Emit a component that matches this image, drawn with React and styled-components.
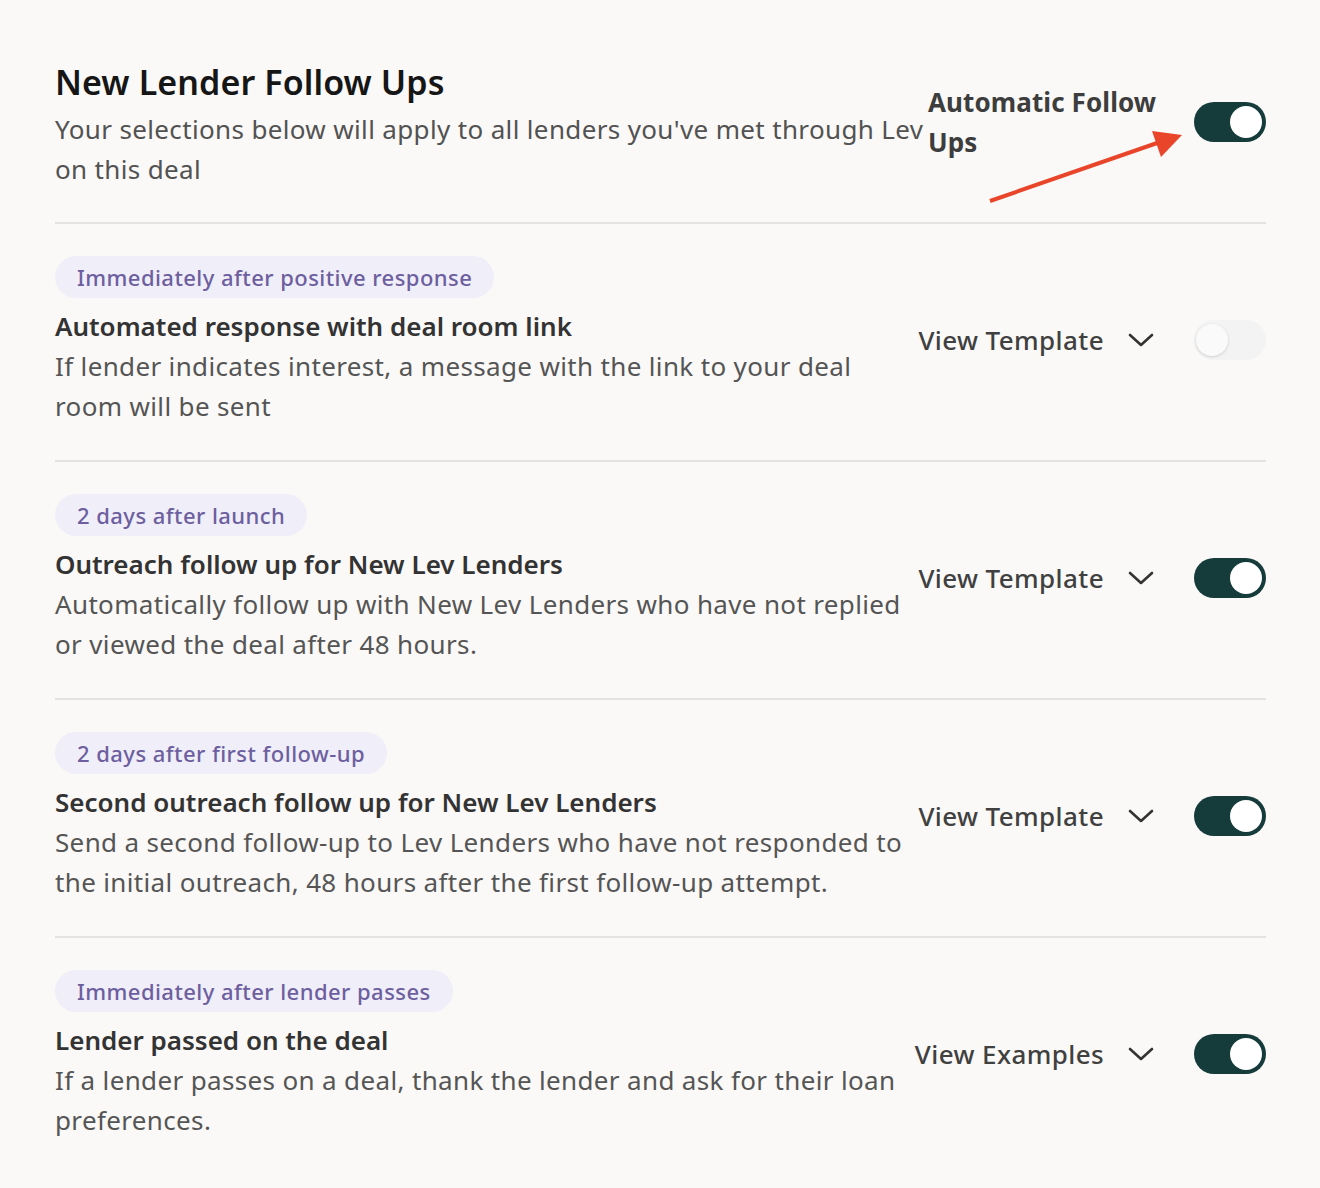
import React from 'react';
import styled, { createGlobalStyle } from 'styled-components';

const GlobalStyle = createGlobalStyle`
  html, body {
    margin: 0;
    padding: 0;
    background: #faf9f7;
  }
  body {
    font-family: 'Noto Sans', 'Open Sans', sans-serif;
    -webkit-font-smoothing: antialiased;
  }
`;

const Page = styled.div`
  position: relative;
  width: 1320px;
  min-height: 1188px;
  box-sizing: border-box;
  padding: 58px 54px 0 55px;
  background: #faf9f7;
`;

const Header = styled.div`
  display: flex;
  align-items: flex-start;
  justify-content: space-between;
  padding-bottom: 33px;
  border-bottom: 2px solid #e4e3e1;
`;

const HeaderText = styled.div`
  flex: 1;
  max-width: 872px;
`;

const Title = styled.h1`
  margin: 0 0 3px;
  font-size: 34px;
  font-weight: 600;
  line-height: 48px;
  color: #161616;
  letter-spacing: 0.1px;
`;

const Subtitle = styled.p`
  margin: 0;
  font-size: 26px;
  line-height: 40px;
  color: #525252;
  letter-spacing: 0.35px;
`;

const MasterControl = styled.div`
  display: flex;
  align-items: center;
  gap: 34px;
  margin-top: 24px;
`;

const MasterLabel = styled.div`
  width: 232px;
  font-size: 26px;
  font-weight: 700;
  line-height: 40px;
  color: #3d3d3d;
  letter-spacing: 0.1px;
`;

const Section = styled.div`
  display: flex;
  flex-direction: column;
  padding: 32px 0 34px;
  border-bottom: ${p => (p.last ? 'none' : '2px solid #e4e3e1')};
`;

const Pill = styled.span`
  align-self: flex-start;
  display: inline-flex;
  align-items: center;
  height: 42px;
  padding: 0 22px;
  border-radius: 21px;
  background: #f0eef8;
  color: #6d5f9f;
  font-size: 22px;
  font-weight: 500;
  letter-spacing: 0.45px;
  margin-bottom: 8px;
`;

const Body = styled.div`
  display: flex;
  align-items: flex-start;
  justify-content: space-between;
`;

const Info = styled.div`
  width: 852px;
`;

const ItemTitle = styled.h2`
  margin: 0;
  font-size: 26px;
  font-weight: 600;
  line-height: 40px;
  color: #333333;
`;

const ItemDesc = styled.p`
  margin: 0;
  font-size: 26px;
  line-height: 40px;
  color: #555555;
  letter-spacing: 0.35px;
`;

const Controls = styled.div`
  display: flex;
  align-items: center;
  margin-top: 14px;
`;

const ViewButton = styled.button`
  display: flex;
  align-items: center;
  gap: 24px;
  padding: 0;
  border: none;
  background: none;
  font-family: inherit;
  font-size: 26px;
  font-weight: 500;
  letter-spacing: 0.4px;
  color: #404040;
  cursor: pointer;
  margin-right: 40px;
`;

const Track = styled.div`
  position: relative;
  width: 72px;
  height: 40px;
  border-radius: 20px;
  box-sizing: border-box;
  background: ${p => (p.on ? '#153b3b' : '#f3f3f3')};
  flex-shrink: 0;
`;

const Knob = styled.div`
  position: absolute;
  top: 4px;
  left: ${p => (p.on ? '36px' : '2px')};
  width: 32px;
  height: 32px;
  border-radius: 50%;
  background: ${p => (p.on ? '#ffffff' : '#fafafa')};
  box-shadow: ${p => (p.on ? 'none' : '0 1px 3px rgba(0,0,0,0.15)')};
`;

const Annotation = styled.svg`
  position: absolute;
  left: 980px;
  top: 125px;
  pointer-events: none;
`;

const Chevron = () => (
  <svg width="26" height="16" viewBox="0 0 26 16" fill="none">
    <path d="M2 3 L13 13 L24 3" stroke="#333" strokeWidth="2.6" strokeLinecap="round" strokeLinejoin="round" />
  </svg>
);

const Toggle = ({ on }) => (
  <Track on={on}>
    <Knob on={on} />
  </Track>
);

const items = [
  {
    pill: 'Immediately after positive response',
    title: 'Automated response with deal room link',
    desc: 'If lender indicates interest, a message with the link to your deal room will be sent',
    action: 'View Template',
    on: false,
  },
  {
    pill: '2 days after launch',
    title: 'Outreach follow up for New Lev Lenders',
    desc: 'Automatically follow up with New Lev Lenders who have not replied or viewed the deal after 48 hours.',
    action: 'View Template',
    on: true,
  },
  {
    pill: '2 days after first follow-up',
    title: 'Second outreach follow up for New Lev Lenders',
    desc: 'Send a second follow-up to Lev Lenders who have not responded to the initial outreach, 48 hours after the first follow-up attempt.',
    action: 'View Template',
    on: true,
  },
  {
    pill: 'Immediately after lender passes',
    title: 'Lender passed on the deal',
    desc: 'If a lender passes on a deal, thank the lender and ask for their loan preferences.',
    action: 'View Examples',
    on: true,
  },
];

const App = () => (
  <Page>
    <GlobalStyle />
    <Header>
      <HeaderText>
        <Title>New Lender Follow Ups</Title>
        <Subtitle>Your selections below will apply to all lenders you've met through Lev on this deal</Subtitle>
      </HeaderText>
      <MasterControl>
        <MasterLabel>Automatic Follow Ups</MasterLabel>
        <Toggle on />
      </MasterControl>
    </Header>
    {items.map((it, i) => (
      <Section key={it.title} last={i === items.length - 1}>
        <Pill>{it.pill}</Pill>
        <Body>
          <Info>
            <ItemTitle>{it.title}</ItemTitle>
            <ItemDesc>{it.desc}</ItemDesc>
          </Info>
          <Controls>
            <ViewButton>
              {it.action}
              <Chevron />
            </ViewButton>
            <Toggle on={it.on} />
          </Controls>
        </Body>
      </Section>
    ))}
    <Annotation width="210" height="85" viewBox="0 0 210 85">
      <line x1="10" y1="76" x2="180" y2="17" stroke="#e8452a" strokeWidth="4" />
      <polygon points="202,10 172,6 181,32" fill="#e8452a" />
    </Annotation>
  </Page>
);

export default App;
